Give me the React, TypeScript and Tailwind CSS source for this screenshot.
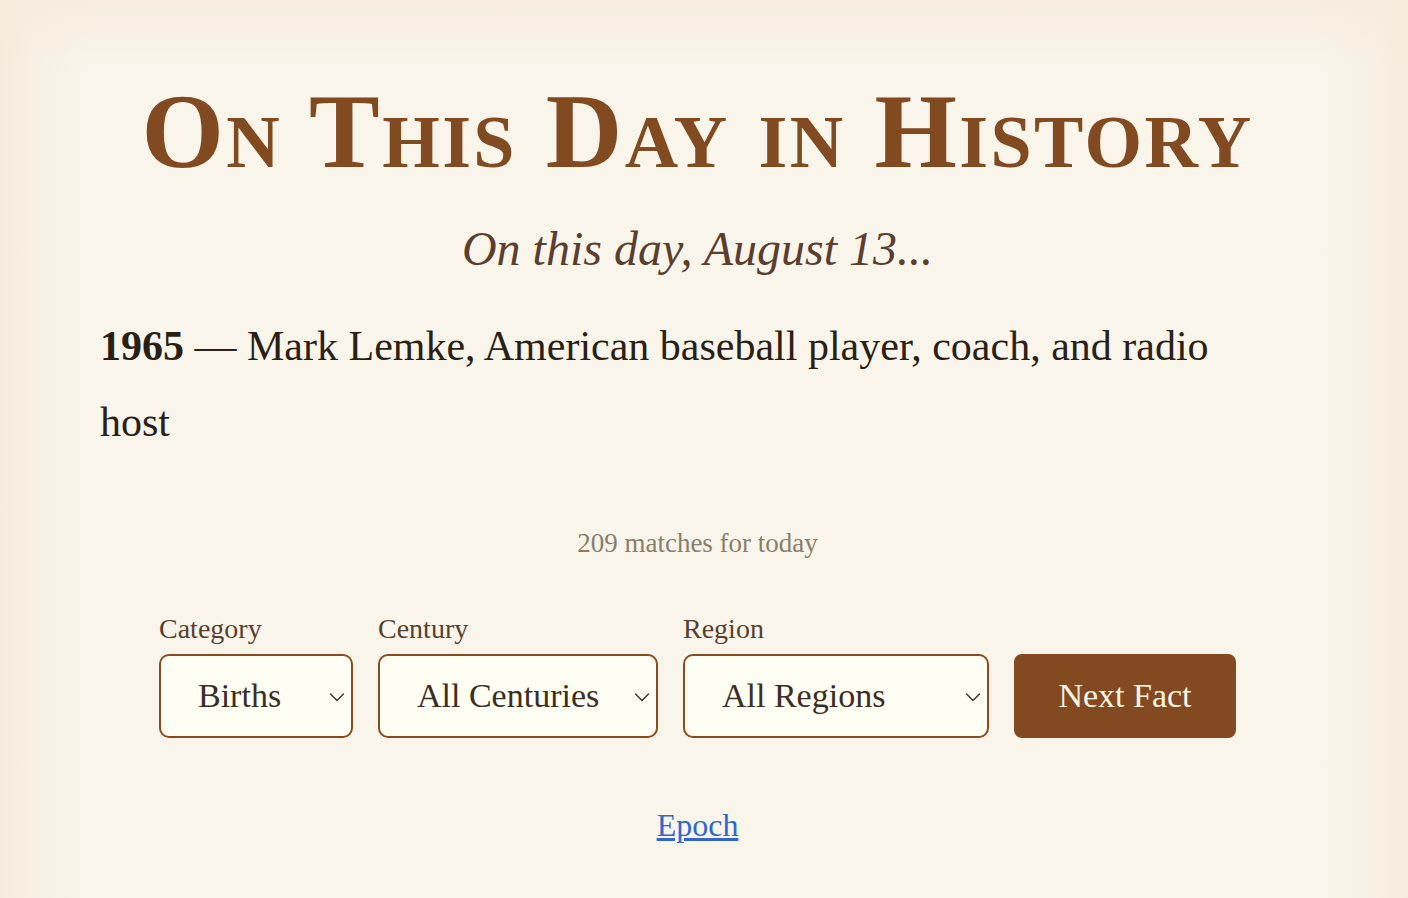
import React from "react";

function Chevron() {
  return (
    <svg
      className="pointer-events-none absolute right-[8px] top-1/2 -translate-y-[40%]"
      width="16"
      height="10"
      viewBox="0 0 16 10"
      fill="none"
    >
      <path d="M1.5 2 L8 8.5 L14.5 2" stroke="#3a2e25" strokeWidth="1.4" strokeLinecap="round" strokeLinejoin="round" />
    </svg>
  );
}

function Field({ label, value, options, width }: { label: string; value: string; options: string[]; width: string }) {
  return (
    <div className="flex flex-col gap-[4px]">
      <label className="text-[28px] leading-[42px] text-[#5a3e2e]">{label}</label>
      <div className={"relative " + width}>
        <select
          defaultValue={value}
          className="h-[84px] w-full appearance-none rounded-[10px] border-2 border-[#8b4a1f] bg-[#fffef2] pl-[37px] pr-[30px] text-[34px] text-[#3a2e25] outline-none [font-family:'Liberation_Serif',serif]"
        >
          {options.map((o) => (
            <option key={o}>{o}</option>
          ))}
        </select>
        <Chevron />
      </div>
    </div>
  );
}

export default function App() {
  return (
    <div className="min-h-screen w-full bg-[linear-gradient(to_right,#f4ecdd_0px,#f7f1e4_30px,#f9f5ea_90px,#f9f5ea_calc(100%-90px),#f7f1e4_calc(100%-30px),#f4ecdd_100%)] [font-family:'Liberation_Serif',serif]">
      <div className="min-h-screen bg-[linear-gradient(to_bottom,rgba(244,236,221,0.8)_0px,rgba(249,245,234,0)_70px)]">
        <div className="flex flex-col pb-[60px] pl-[100px] pr-[113px] pt-[68px]">
          <h1 className="text-center text-[106px] font-bold leading-[1.2] tracking-[2.4px] text-[#814a20] [font-variant-caps:small-caps]">
            On This Day in History
          </h1>
          <p className="mt-[25px] text-center text-[48px] italic leading-[1.2] text-[#5a3e2e]">
            On this day, August 13...
          </p>
          <p className="mt-[30px] max-w-[1150px] text-[42px] leading-[76px] text-[#2a1f14]">
            <strong className="font-bold">1965</strong> — Mark Lemke, American baseball player, coach, and radio host
          </p>
          <p className="mt-[64px] text-center text-[27px] leading-[39px] text-[#8a7e6a]">209 matches for today</p>
          <div className="mt-[45px] flex items-end justify-center gap-[25px]">
            <Field label="Category" value="Births" options={["All Categories", "Events", "Births", "Deaths"]} width="w-[194px]" />
            <Field label="Century" value="All Centuries" options={["All Centuries", "21st", "20th", "19th"]} width="w-[280px]" />
            <Field label="Region" value="All Regions" options={["All Regions", "Americas", "Europe", "Asia"]} width="w-[306px]" />
            <button className="h-[84px] w-[222px] rounded-[8px] bg-[#834a21] text-[34px] text-[#fdf6e3]">Next Fact</button>
          </div>
          <div className="mt-[63px] text-center">
            <a href="#" className="text-[32px] leading-[48px] text-[#3366cc] underline">
              Epoch
            </a>
          </div>
        </div>
      </div>
    </div>
  );
}
